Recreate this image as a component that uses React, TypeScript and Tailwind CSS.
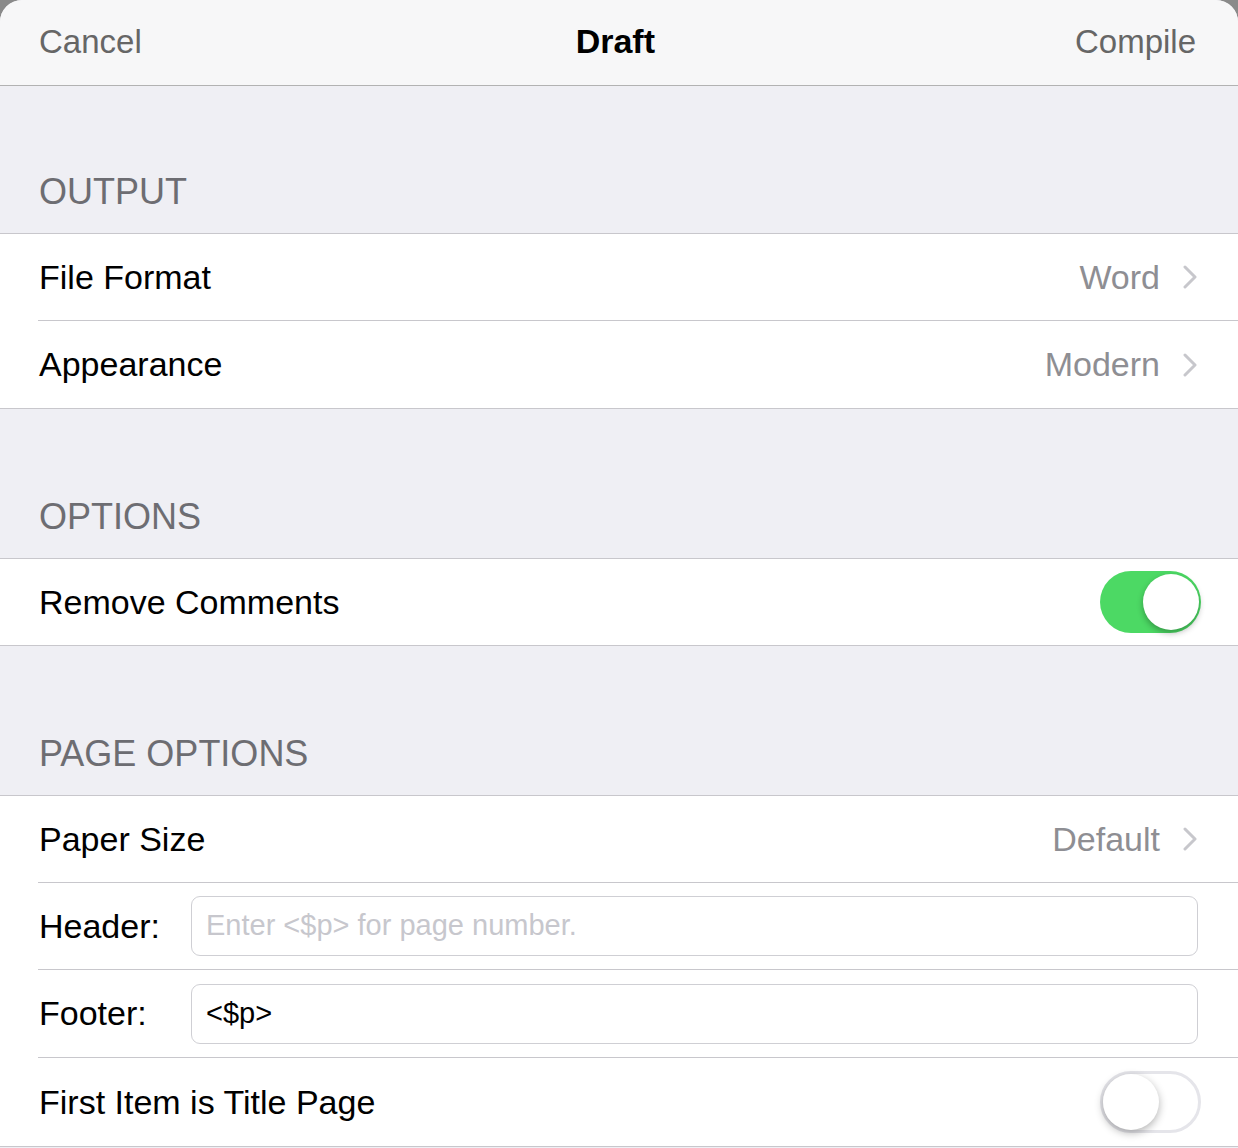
import React from "react";

type RowProps = {
  h: string;
  last?: boolean;
  children: React.ReactNode;
};

function Row({ h, last, children }: RowProps) {
  return (
    <div className={`bg-white ${h}`}>
      <div className={`ml-[38px] h-full pl-px pr-[41px] flex items-center ${last ? "" : "border-b border-[#c8c7cc]"}`}>
        {children}
      </div>
    </div>
  );
}

function Chevron() {
  return (
    <svg width="14" height="24" viewBox="0 0 14 24" className="ml-[23px]">
      <polyline points="2,2 12,12 2,22" fill="none" stroke="#c7c7cc" strokeWidth="3" strokeLinecap="round" strokeLinejoin="round" />
    </svg>
  );
}

function Toggle({ on }: { on: boolean }) {
  if (on) {
    return (
      <div className="w-[101px] h-[62px] rounded-full bg-[#4cd964] relative mr-[-4px]">
        <div className="absolute right-[2px] top-[3px] w-[56px] h-[56px] rounded-full bg-white shadow-[0_3px_6px_rgba(0,0,0,0.3)]" />
      </div>
    );
  }
  return (
    <div className="w-[101px] h-[62px] rounded-full border-[3px] border-[#e5e5ea] bg-white relative mr-[-4px]">
      <div className="absolute left-0 top-0 w-[56px] h-[56px] rounded-full bg-white shadow-[0_3px_8px_rgba(0,0,0,0.3)]" />
    </div>
  );
}

function SectionHeader({ h, title }: { h: string; title: string }) {
  return (
    <div className={`${h} flex items-end pl-[39px] pb-[23px] border-b border-[#c8c7cc]`}>
      <span className="text-[36px] leading-none text-[#6d6d72]">{title}</span>
    </div>
  );
}

export default function App() {
  return (
    <div className="bg-[#8a8a8a] font-['Liberation_Sans',Arial,sans-serif]">
      <div className="bg-[#efeff4] rounded-t-[22px] overflow-hidden h-[1148px]">
        <div className="h-[86px] bg-[#f7f7f8] border-b border-[#b2b2b2] flex items-center justify-between pl-[39px] pr-[42px] text-[33px] pb-[2px]">
          <span className="text-[#666666]">Cancel</span>
          <span className="font-bold text-black text-[34px] ml-[14px]">Draft</span>
          <span className="text-[#666666]">Compile</span>
        </div>

        <SectionHeader h="h-[148px]" title="OUTPUT" />
        <Row h="h-[87px]">
          <span className="text-[34px] text-black">File Format</span>
          <span className="ml-auto text-[34px] text-[#8e8e93]">Word</span>
          <Chevron />
        </Row>
        <Row h="h-[87px]" last>
          <span className="text-[34px] text-black">Appearance</span>
          <span className="ml-auto text-[34px] text-[#8e8e93]">Modern</span>
          <Chevron />
        </Row>

        <div className="border-t border-[#c8c7cc]">
          <SectionHeader h="h-[150px]" title="OPTIONS" />
        </div>
        <Row h="h-[86px]" last>
          <span className="text-[34px] text-black">Remove Comments</span>
          <div className="ml-auto">
            <Toggle on />
          </div>
        </Row>

        <div className="border-t border-[#c8c7cc]">
          <SectionHeader h="h-[150px]" title="PAGE OPTIONS" />
        </div>
        <Row h="h-[87px]">
          <span className="text-[34px] text-black">Paper Size</span>
          <span className="ml-auto text-[34px] text-[#8e8e93]">Default</span>
          <Chevron />
        </Row>
        <Row h="h-[87px]">
          <span className="text-[34px] text-black w-[152px] shrink-0">Header:</span>
          <div className="flex-1 h-[60px] rounded-[9px] border border-[#cfcfd4] flex items-center pl-[14px] mr-[-1px]">
            <span className="text-[29px] text-[#c7c7cd]">Enter &lt;$p&gt; for page number.</span>
          </div>
        </Row>
        <Row h="h-[88px]">
          <span className="text-[34px] text-black w-[152px] shrink-0">Footer:</span>
          <div className="flex-1 h-[60px] rounded-[9px] border border-[#cfcfd4] flex items-center pl-[14px] mr-[-1px]">
            <span className="text-[29px] text-black">&lt;$p&gt;</span>
          </div>
        </Row>
        <div className="bg-white h-[89px] border-b border-[#c8c7cc]">
          <div className="ml-[38px] h-full pl-px pr-[41px] flex items-center">
            <span className="text-[34px] text-black">First Item is Title Page</span>
            <div className="ml-auto">
              <Toggle on={false} />
            </div>
          </div>
        </div>
      </div>
    </div>
  );
}
